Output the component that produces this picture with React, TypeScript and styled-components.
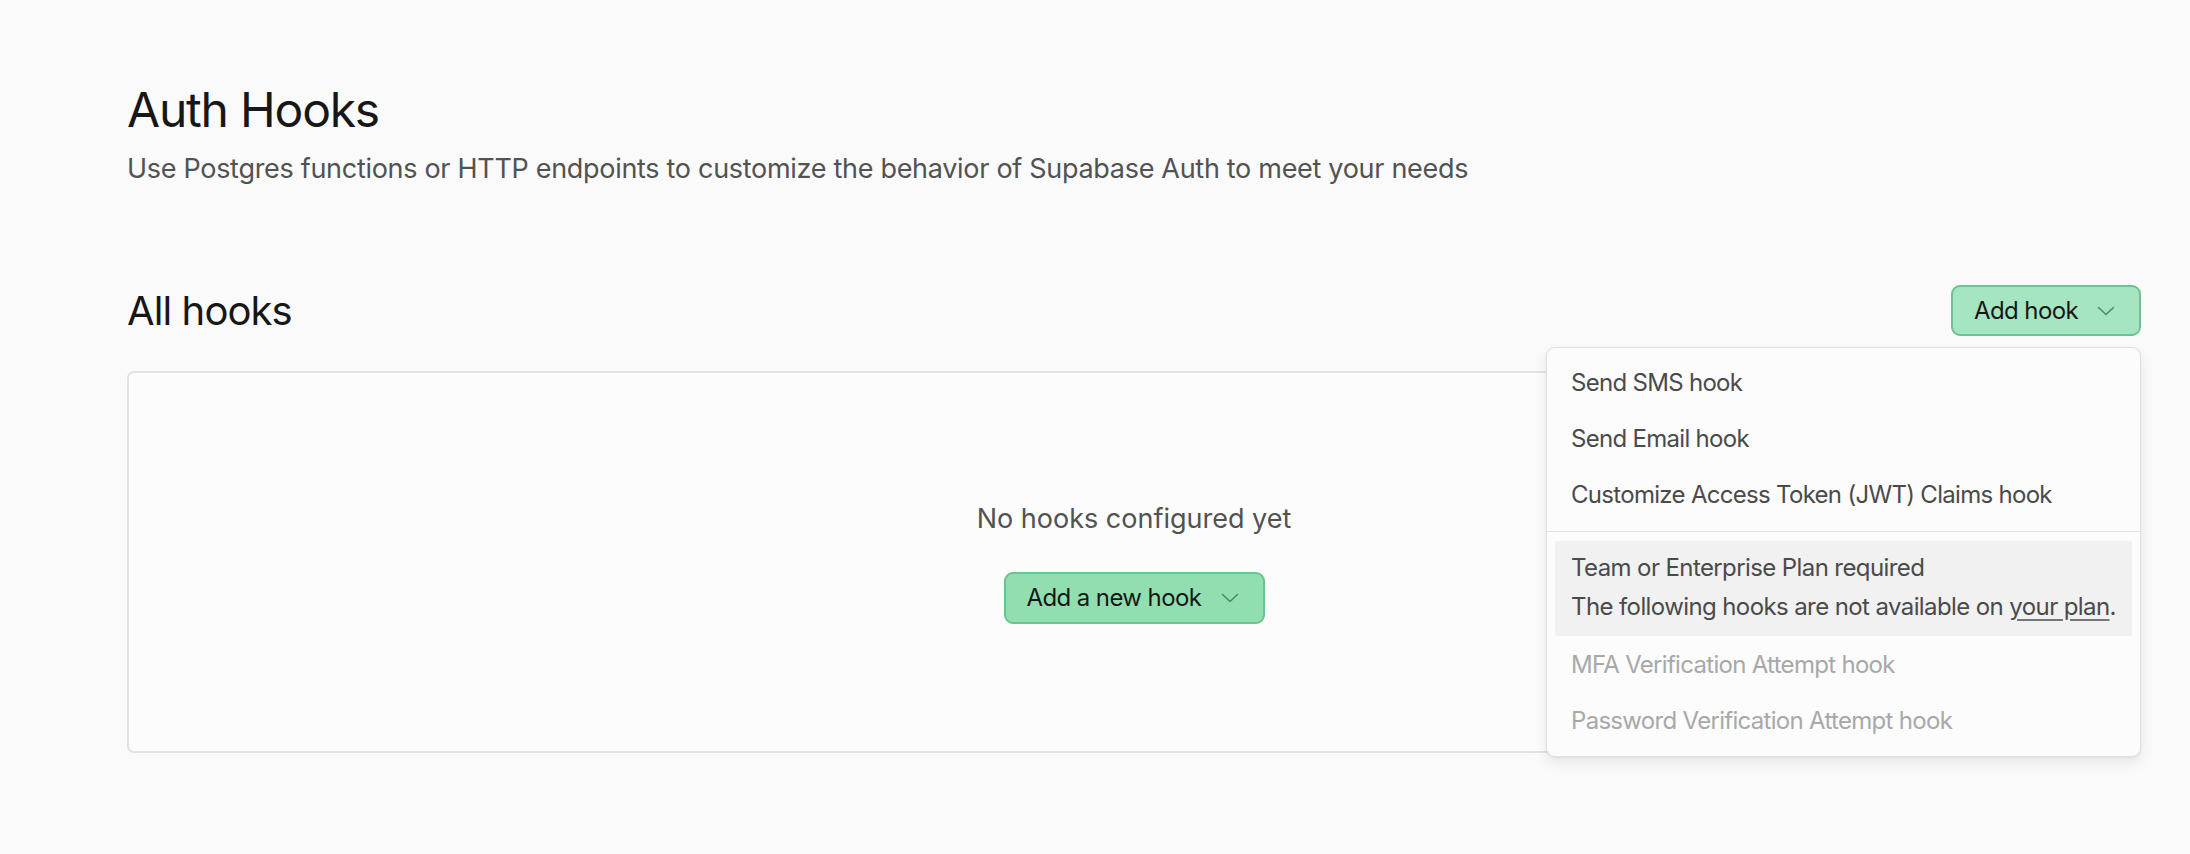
import React from "react";
import styled, { createGlobalStyle } from "styled-components";

const GlobalStyle = createGlobalStyle`
  html, body {
    margin: 0;
    padding: 0;
    background: #fafafa;
    font-family: Inter, "Noto Sans", sans-serif;
    -webkit-font-smoothing: antialiased;
  }
  * { box-sizing: border-box; }
`;

const Page = styled.main`
  padding: 81px 49px 60px 127px;
  min-height: 854px;
`;

const Title = styled.h1`
  margin: 0;
  font-size: 48px;
  line-height: 57.6px;
  font-weight: 400;
  color: #171717;
  letter-spacing: -1.2px;
`;

const Subtitle = styled.p`
  margin: 11px 0 0;
  font-size: 27px;
  line-height: 37.8px;
  color: #525252;
  letter-spacing: -0.3px;
`;

const SectionHeader = styled.div`
  margin-top: 98px;
  display: flex;
  align-items: center;
  justify-content: space-between;
  height: 51px;
`;

const SectionTitle = styled.h2`
  margin: 0;
  font-size: 40px;
  line-height: 48px;
  font-weight: 400;
  color: #171717;
  letter-spacing: -0.9px;
`;

const MenuAnchor = styled.div`
  position: relative;
`;

const BrandButton = styled.button<{ $tone: "light" | "mid"; $w: number; $h: number }>`
  display: inline-flex;
  align-items: center;
  justify-content: space-between;
  width: ${(p) => p.$w}px;
  height: ${(p) => p.$h}px;
  padding: 0 24px 0 21px;
  border-radius: 9px;
  border: 2px solid #6cc290;
  background: ${(p) => (p.$tone === "light" ? "#a6e5c1" : "#91dfb1")};
  color: #171717;
  font-family: inherit;
  font-size: 24px;
  line-height: 1;
  letter-spacing: -0.6px;
  cursor: pointer;
`;

const Chevron = () => (
  <svg width="18" height="10" viewBox="0 0 18 10" fill="none">
    <path d="M1.5 1.5 L9 8.5 L16.5 1.5" stroke="#4d8a66" strokeWidth="1.6" strokeLinecap="round" strokeLinejoin="round" />
  </svg>
);

const Card = styled.section`
  margin-top: 35px;
  height: 382px;
  border: 2px solid #e2e2e2;
  border-radius: 7px;
  background: #fcfcfc;
  display: flex;
  flex-direction: column;
  align-items: center;
  justify-content: center;
  gap: 34px;
`;

const EmptyText = styled.p`
  margin: 0;
  font-size: 27px;
  line-height: 37.8px;
  color: #525252;
`;

const Menu = styled.div`
  position: absolute;
  top: 62px;
  right: 0;
  width: 595px;
  padding: 6px 8px 8px;
  background: #fcfcfc;
  border: 1px solid #e0e0e0;
  border-radius: 9px;
  box-shadow: 0 6px 14px rgba(0, 0, 0, 0.08), 0 1px 3px rgba(0, 0, 0, 0.05);
  z-index: 10;
`;

const MenuItem = styled.div<{ $disabled?: boolean }>`
  height: 56px;
  display: flex;
  align-items: center;
  padding: 0 16px;
  font-size: 24px;
  letter-spacing: -0.7px;
  color: ${(p) => (p.$disabled ? "#a8a8a8" : "#4a4a4a")};
  border-radius: 4px;
  white-space: nowrap;
`;

const Separator = styled.div`
  height: 1px;
  background: #e2e2e2;
  margin: 9px -8px;
`;

const Notice = styled.div`
  background: #f1f1f1;
  padding: 7px 16px 10px;
  border-radius: 2px;
`;

const NoticeLine = styled.div`
  font-size: 24px;
  line-height: 39px;
  letter-spacing: -0.6px;
  color: #4a4a4a;
  white-space: nowrap;
`;

const PlanLink = styled.a`
  color: inherit;
  text-decoration: underline;
  text-underline-offset: 4px;
  text-decoration-color: #777;
`;

export default function App() {
  return (
    <>
      <GlobalStyle />
      <Page>
        <Title>Auth Hooks</Title>
        <Subtitle>
          Use Postgres functions or HTTP endpoints to customize the behavior of Supabase Auth to meet your needs
        </Subtitle>
        <SectionHeader>
          <SectionTitle>All hooks</SectionTitle>
          <MenuAnchor>
            <BrandButton $tone="light" $w={190} $h={51}>
              Add hook
              <Chevron />
            </BrandButton>
            <Menu>
              <MenuItem>Send SMS hook</MenuItem>
              <MenuItem>Send Email hook</MenuItem>
              <MenuItem>Customize Access Token (JWT) Claims hook</MenuItem>
              <Separator />
              <Notice>
                <NoticeLine>Team or Enterprise Plan required</NoticeLine>
                <NoticeLine>
                  The following hooks are not available on <PlanLink href="#">your plan</PlanLink>.
                </NoticeLine>
              </Notice>
              <MenuItem $disabled>MFA Verification Attempt hook</MenuItem>
              <MenuItem $disabled>Password Verification Attempt hook</MenuItem>
            </Menu>
          </MenuAnchor>
        </SectionHeader>
        <Card>
          <EmptyText>No hooks configured yet</EmptyText>
          <BrandButton $tone="mid" $w={261} $h={52}>
            Add a new hook
            <Chevron />
          </BrandButton>
        </Card>
      </Page>
    </>
  );
}
